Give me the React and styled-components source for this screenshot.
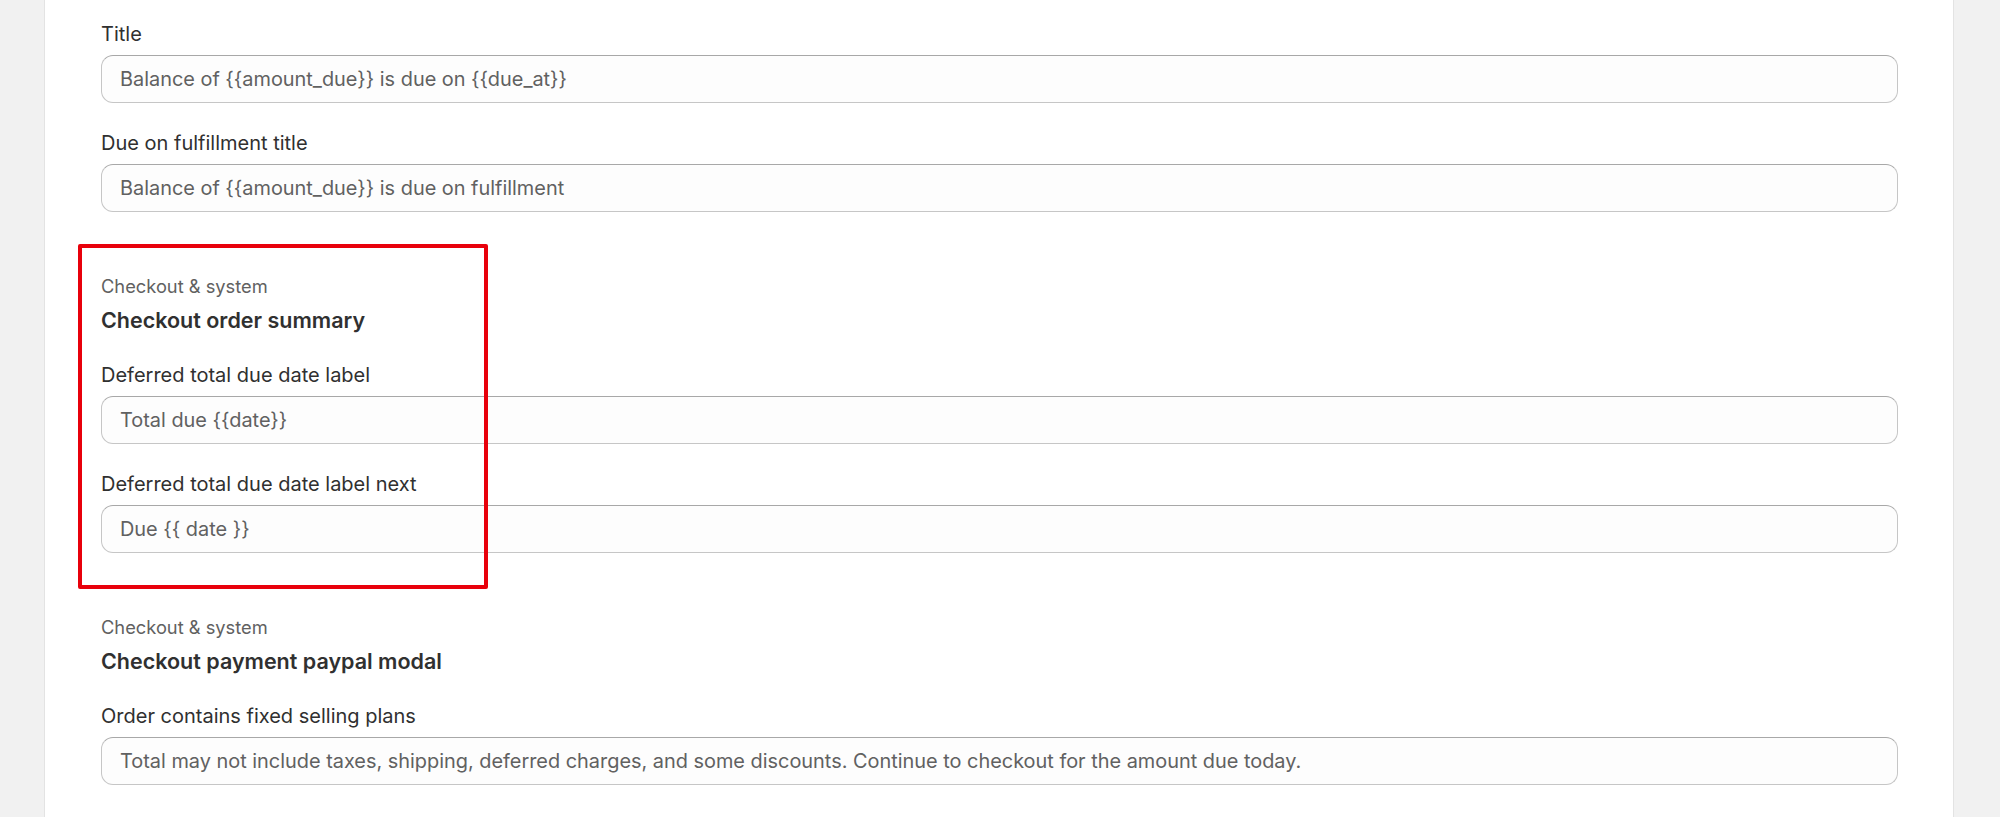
import React from 'react'
import styled, { createGlobalStyle } from 'styled-components'

const GlobalStyle = createGlobalStyle`
  html, body {
    margin: 0;
    padding: 0;
    height: 817px;
    overflow: hidden;
    background: #f1f1f1;
  }
  * { box-sizing: border-box; }
`

const sections = [
  {
    eyebrow: 'Checkout & system',
    title: 'Checkout order summary',
    highlighted: true,
    fields: [
      { label: 'Deferred total due date label', value: 'Total due {{date}}' },
      { label: 'Deferred total due date label next', value: 'Due {{ date }}' },
    ],
  },
  {
    eyebrow: 'Checkout & system',
    title: 'Checkout payment paypal modal',
    fields: [
      {
        label: 'Order contains fixed selling plans',
        value: 'Total may not include taxes, shipping, deferred charges, and some discounts. Continue to checkout for the amount due today.',
      },
    ],
  },
]

const topFields = [
  { label: 'Title', value: 'Balance of {{amount_due}} is due on {{due_at}}' },
  { label: 'Due on fulfillment title', value: 'Balance of {{amount_due}} is due on fulfillment' },
]

const Field = ({ label, value }) => (
  <StyledField>
    <Label>{label}</Label>
    <Input>{value}</Input>
  </StyledField>
)

const App = () => {
  return (
    <>
      <GlobalStyle />
      <Page>
        <Card>
          <FieldList>
            {topFields.map(f => <Field key={f.label} {...f} />)}
          </FieldList>

          {sections.map(s => (
            <Section key={s.title}>
              <Eyebrow>{s.eyebrow}</Eyebrow>
              <Heading>{s.title}</Heading>
              <FieldList>
                {s.fields.map(f => <Field key={f.label} {...f} />)}
              </FieldList>
              {s.highlighted && <Highlight />}
            </Section>
          ))}
        </Card>
      </Page>
    </>
  )
}
export default App

const Page = styled.div`
  display: flex;
  padding-left: 44px;
  height: 817px;
  font-family: Inter, "Noto Sans", sans-serif;
`

const Card = styled.div`
  width: 1910px;
  height: 900px;
  background: #ffffff;
  border-left: 1px solid #e3e3e3;
  border-right: 1px solid #e3e3e3;
  padding: 19px 55px 0 56px;
`

const FieldList = styled.div`
  display: flex;
  flex-direction: column;
  gap: 25px;
`

const StyledField = styled.div`
  display: flex;
  flex-direction: column;
  gap: 6px;
`

const Label = styled.div`
  font-size: 20px;
  line-height: 30px;
  color: #303030;
`

const Input = styled.div`
  height: 48px;
  display: flex;
  align-items: center;
  padding: 0 18px;
  background: #fdfdfd;
  border: 1px solid #c6c6c6;
  border-top-color: #a8a8a8;
  border-radius: 12px;
  font-size: 19.9px;
  color: #616161;
  white-space: nowrap;
`

const Section = styled.div`
  position: relative;
  margin-top: 62px;
`

const Eyebrow = styled.div`
  font-size: 18.3px;
  line-height: 24px;
  color: #616161;
  margin-bottom: 8px;
`

const Heading = styled.div`
  font-size: 21.5px;
  line-height: 28px;
  font-weight: 600;
  color: #303030;
  margin-bottom: 26px;
`

const Highlight = styled.div`
  position: absolute;
  left: -23px;
  top: -30px;
  width: 410px;
  height: 345px;
  border: 4px solid #e8000b;
  border-radius: 2px;
  pointer-events: none;
`
